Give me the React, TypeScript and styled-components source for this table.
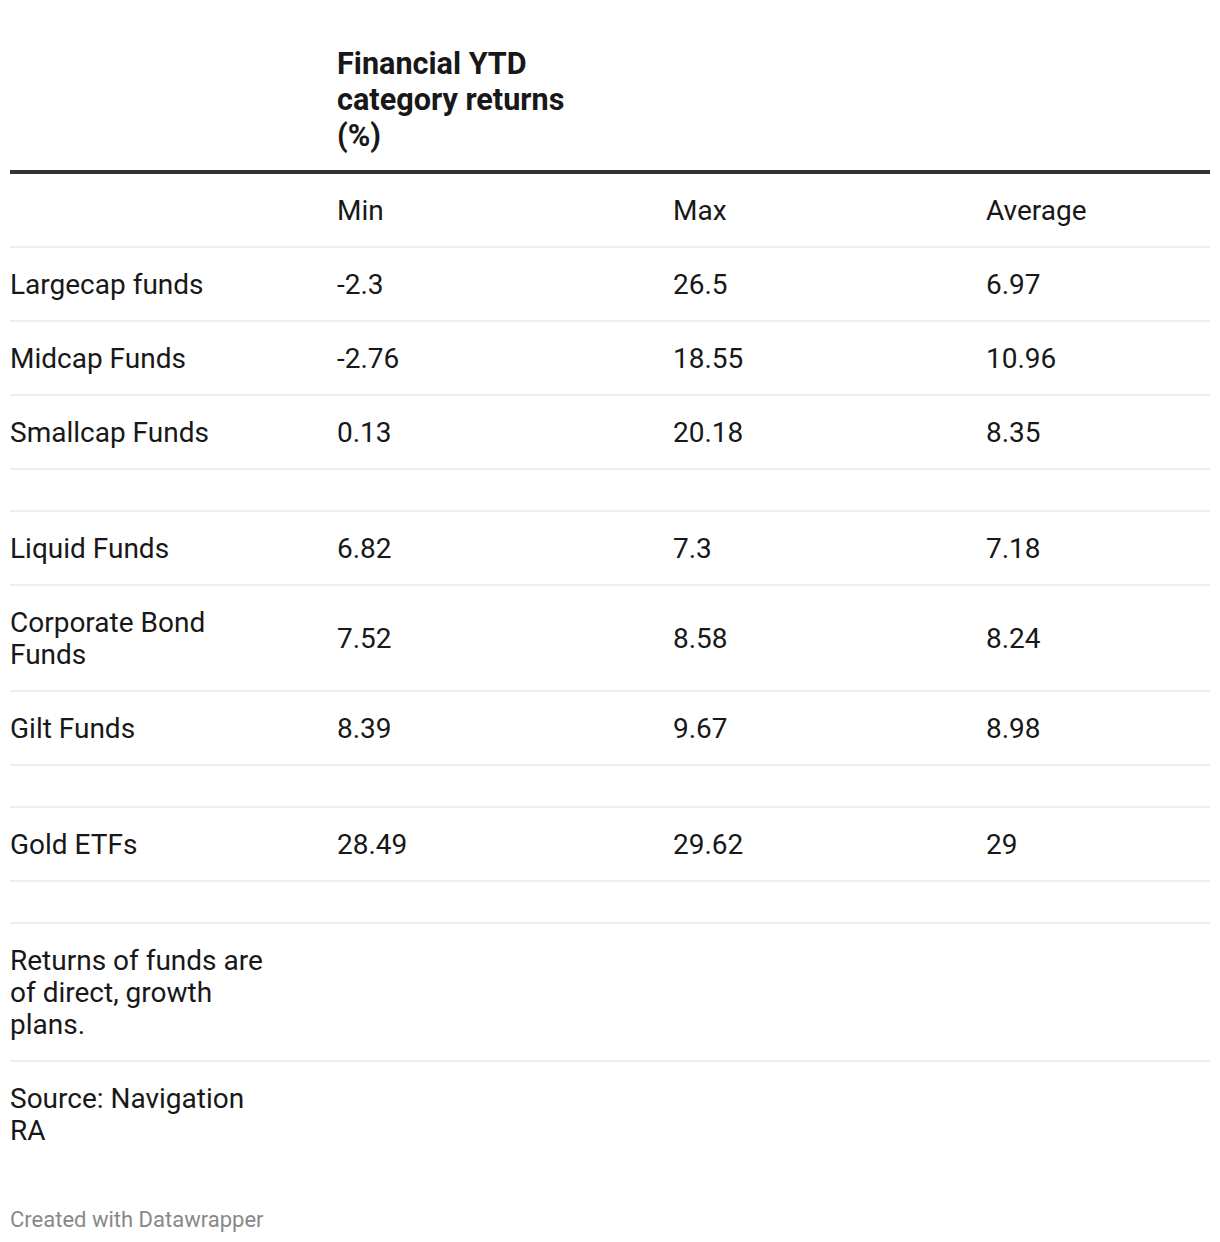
import React from "react";
import styled, { createGlobalStyle } from "styled-components";

const Global = createGlobalStyle`
  html, body { margin: 0; padding: 0; background: #ffffff; }
  body { font-family: Roboto, "Liberation Sans", Arial, sans-serif; color: #181818; }
`;

const Page = styled.div`
  padding: 45px 10px 0 10px;
  width: 1200px;
`;

const Table = styled.table`
  width: 1200px;
  border-collapse: collapse;
  table-layout: fixed;
  font-size: 28px;
  line-height: 32px;
`;

const Col = styled.col<{ $w: number }>`
  width: ${(p) => p.$w}px;
`;

const TitleCell = styled.th`
  text-align: left;
  vertical-align: bottom;
  padding: 1px 0 16px 0;
  font-weight: 700;
  font-size: 30.6px;
  line-height: 36px;
  border-bottom: 4px solid #333333;
`;

const TitleText = styled.div`
  max-width: 260px;
`;

const HeadCell = styled.th`
  text-align: left;
  font-weight: 400;
  padding: 21px 0 19px 0;
  border-bottom: 2px solid #eeeeee;
`;

const Cell = styled.td<{ $first?: boolean; $last?: boolean }>`
  padding: 21px ${(p) => (p.$first ? "62px" : "0")} 19px 0;
  vertical-align: middle;
  border-bottom: 2px solid ${(p) => (p.$last ? "transparent" : "#eeeeee")};
`;

const SpacerCell = styled.td`
  height: 40px;
  padding: 0;
  border-bottom: 2px solid #eeeeee;
`;

const Footer = styled.div`
  margin-top: 38px;
  font-size: 22px;
  line-height: 28px;
  color: #888888;
`;

type Row = { label: string; v: [string, string, string] } | { spacer: true } | { note: string; last?: boolean };

const rows: Row[] = [
  { label: "Largecap funds", v: ["-2.3", "26.5", "6.97"] },
  { label: "Midcap Funds", v: ["-2.76", "18.55", "10.96"] },
  { label: "Smallcap Funds", v: ["0.13", "20.18", "8.35"] },
  { spacer: true },
  { label: "Liquid Funds", v: ["6.82", "7.3", "7.18"] },
  { label: "Corporate Bond Funds", v: ["7.52", "8.58", "8.24"] },
  { label: "Gilt Funds", v: ["8.39", "9.67", "8.98"] },
  { spacer: true },
  { label: "Gold ETFs", v: ["28.49", "29.62", "29"] },
  { spacer: true },
  { note: "Returns of funds are of direct, growth plans." },
  { note: "Source: Navigation RA", last: true },
];

export default function App() {
  return (
    <>
      <Global />
      <Page>
        <Table>
          <colgroup>
            <Col $w={327} />
            <Col $w={336} />
            <Col $w={313} />
            <Col $w={224} />
          </colgroup>
          <thead>
            <tr>
              <TitleCell />
              <TitleCell>
                <TitleText>Financial YTD category returns (%)</TitleText>
              </TitleCell>
              <TitleCell />
              <TitleCell />
            </tr>
            <tr>
              <HeadCell />
              <HeadCell>Min</HeadCell>
              <HeadCell>Max</HeadCell>
              <HeadCell>Average</HeadCell>
            </tr>
          </thead>
          <tbody>
            {rows.map((r, i) => {
              if ("spacer" in r) {
                return (
                  <tr key={i}>
                    <SpacerCell />
                    <SpacerCell />
                    <SpacerCell />
                    <SpacerCell />
                  </tr>
                );
              }
              if ("note" in r) {
                return (
                  <tr key={i}>
                    <Cell $first $last={r.last}>{r.note}</Cell>
                    <Cell $last={r.last} />
                    <Cell $last={r.last} />
                    <Cell $last={r.last} />
                  </tr>
                );
              }
              return (
                <tr key={i}>
                  <Cell $first>{r.label}</Cell>
                  <Cell>{r.v[0]}</Cell>
                  <Cell>{r.v[1]}</Cell>
                  <Cell>{r.v[2]}</Cell>
                </tr>
              );
            })}
          </tbody>
        </Table>
        <Footer>Created with Datawrapper</Footer>
      </Page>
    </>
  );
}
